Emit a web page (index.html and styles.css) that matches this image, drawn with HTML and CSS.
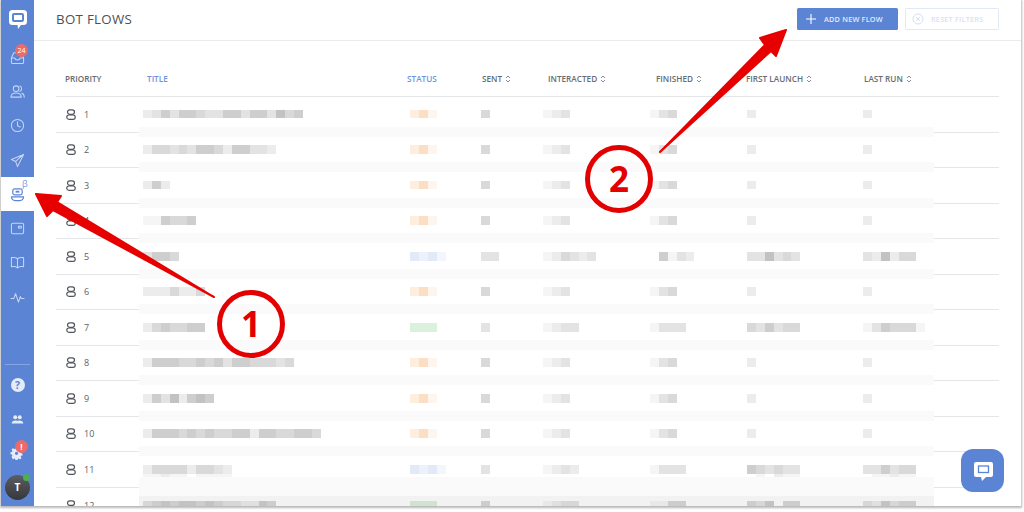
FILE: index.html
```html
<!DOCTYPE html>
<html lang="en">
<head>
<meta charset="utf-8">
<title>Bot Flows</title>
<link rel="stylesheet" href="styles.css">
</head>
<body>
<div class="window">
  <nav class="sidebar">
    <div class="logo">
      <svg width="20" height="21" viewBox="0 0 20 21"><path class="logo-b" d="M4.500 1h11a3.500 3.500 0 0 1 3.500 3.500v8a3.500 3.500 0 0 1-3.500 3.500h-2.500l-3 4-.5-4H4.500A3.500 3.500 0 0 1 1 12.500v-8A3.500 3.500 0 0 1 4.500 1z"/><rect class="logo-s" x="5" y="5" width="10" height="7" rx="1"/></svg>
    </div>
    <div class="nav-item">
      <svg class="ico" width="15" height="15" viewBox="0 0 16 16"><path d="M1.500 8.500 4 3h8l2.500 5.500V13a1.500 1.500 0 0 1-1.500 1.500H3A1.500 1.500 0 0 1 1.500 13zM1.500 8.500H5c.5 1.500 1.500 2.200 3 2.200s2.500-.7 3-2.200h3.500"/></svg>
      <span class="badge badge-num">24</span>
    </div>
    <div class="nav-item">
      <svg class="ico" width="15" height="15" viewBox="0 0 16 16"><circle cx="6.500" cy="5" r="3"/><path d="M1 14c0-3 2.300-4.500 5.500-4.500S12 11 12 14zM10.500 2.200c2 .2 2.800 4.800 0 5.500M12.500 9.800c1.600.5 2.700 2 2.700 4.200"/></svg>
    </div>
    <div class="nav-item">
      <svg class="ico" width="15" height="15" viewBox="0 0 16 16"><circle cx="8" cy="8" r="6.500"/><path d="M8 4v4.300l3 1.200"/></svg>
    </div>
    <div class="nav-item">
      <svg class="ico" width="15" height="15" viewBox="0 0 16 16"><path d="M14.500 1.500 1.500 7l4.500 2 2 5.500zM14.500 1.500 6 9"/></svg>
    </div>
    <div class="nav-item nav-active">
      <svg class="ico-dark" width="15" height="15" viewBox="0 0 16 16"><rect x="3" y="2" width="10" height="6.500" rx="2"/><path d="M1.500 10.500h13c0 2.500-2 4-4 4h-5c-2 0-4-1.500-4-4z"/><rect class="fill" x="6" y="4" width="4" height="2"/></svg>
      <span class="beta">β</span>
    </div>
    <div class="nav-item">
      <svg class="ico" width="15" height="15" viewBox="0 0 16 16"><rect x="1.500" y="2.500" width="13" height="11" rx="1.500"/><path d="M9 5.500h3v2H9z"/></svg>
    </div>
    <div class="nav-item">
      <svg class="ico" width="15" height="15" viewBox="0 0 16 16"><path d="M8 4C6.500 2.800 4 2.500 1.500 2.800v9.700c2.500-.3 5 0 6.500 1.200 1.500-1.200 4-1.500 6.500-1.200V2.800C12 2.500 9.500 2.800 8 4zM8 4v9.700"/></svg>
    </div>
    <div class="nav-item">
      <svg class="ico" width="15" height="15" viewBox="0 0 16 16"><path d="M1 9h3l2-5 3 9 2-6 1 2h3"/></svg>
    </div>
    <div class="nav-spacer"></div>
    <div class="nav-divider"></div>
    <div class="nav-item nav-low">
      <span class="help">?</span>
    </div>
    <div class="nav-item nav-low">
      <svg class="ico-fill" width="13" height="9" viewBox="0 0 14 10"><circle cx="4.500" cy="2.500" r="2.200"/><circle cx="9.500" cy="2.500" r="2.200"/><path d="M0.500 9.500c0-2.500 2-3.500 4-3.500s2.500.6 2.500.6.700-.6 2.500-.6 4 1 4 3.500z"/></svg>
    </div>
    <div class="nav-item nav-low">
      <svg class="ico-fill gear" width="13" height="13" viewBox="-1 0 16 14"><path fill-rule="evenodd" d="M5.800.8h2.400l.4 1.800 1.200.5 1.600-1 1.700 1.700-1 1.600.5 1.200 1.800.4v2.400l-1.800.4-.5 1.200 1 1.600-1.700 1.700-1.600-1-1.200.5-.4 1.800H5.800l-.4-1.800-1.200-.5-1.600 1L.9 11l1-1.600-.5-1.200L-.4 7.800V5.400l1.800-.4.500-1.200-1-1.600L2.600.5l1.600 1 1.200-.5zM7 4.700a2 2 0 1 0 0 4 2 2 0 0 0 0-4z"/></svg>
      <span class="badge badge-alert">!</span>
    </div>
    <div class="nav-item nav-low">
      <span class="avatar">T</span>
      <span class="online"></span>
    </div>
  </nav>

  <main class="content">
    <header class="topbar">
      <h1 class="title">BOT FLOWS</h1>
      <div class="actions">
        <button class="btn btn-primary">
          <svg class="plus" width="10" height="10" viewBox="0 0 10 10"><path d="M5 0v10M0 5h10"/></svg>
          ADD NEW FLOW
        </button>
        <button class="btn btn-ghost">
          <svg class="reset-ico" width="12" height="12" viewBox="0 0 12 12"><circle cx="6" cy="6" r="5"/><path d="M4 4l4 4M8 4l-4 4"/></svg>
          RESET FILTERS
        </button>
      </div>
    </header>
    <section class="table">
      <div class="thead">
        <span>PRIORITY</span>
        <span class="th-blue">TITLE</span>
        <span class="th-blue">STATUS</span>
        <span>SENT<svg class="sort" viewBox="0 0 6 8"><path d="M1 3 3 1l2 2M1 5l2 2 2-2"/></svg></span>
        <span>INTERACTED<svg class="sort" viewBox="0 0 6 8"><path d="M1 3 3 1l2 2M1 5l2 2 2-2"/></svg></span>
        <span>FINISHED<svg class="sort" viewBox="0 0 6 8"><path d="M1 3 3 1l2 2M1 5l2 2 2-2"/></svg></span>
        <span>FIRST LAUNCH<svg class="sort" viewBox="0 0 6 8"><path d="M1 3 3 1l2 2M1 5l2 2 2-2"/></svg></span>
        <span>LAST RUN<svg class="sort" viewBox="0 0 6 8"><path d="M1 3 3 1l2 2M1 5l2 2 2-2"/></svg></span>
      </div>
      <div class="tbody" id="rows"></div>
    </section>
    <button class="fab" aria-label="Chat">
      <svg width="24" height="24" viewBox="0 0 24 24"><path class="logo-b" d="M5 3h15a2 2 0 0 1 2 2v11a2 2 0 0 1-2 2h-5l-4 4-1-4H5a2 2 0 0 1-2-2V5a2 2 0 0 1 2-2z"/><rect class="fab-s" x="7.500" y="7" width="10" height="6.500"/></svg>
    </button>
  </main>
</div>

<svg class="marks" width="1024" height="512" viewBox="0 0 1024 512">
  <polygon class="arrow" points="36,194 61,196 57,202 214,297 53,210 47,216"/>
  <polygon class="arrow" points="786,30 760,38 765,45 660,152 771,51 776,56"/>
  <circle class="ring" cx="251" cy="324" r="31.500"/>
  <circle class="ring" cx="619" cy="179" r="31.500"/>
  <text class="digit" x="251" y="337">1</text>
  <text class="digit" x="619" y="192">2</text>
</svg>
<script src="app.js"></script>
</body>
</html>
```
FILE: styles.css
```css
* { box-sizing: border-box; }
html, body { margin: 0; height: 100%; background: #fff; overflow: hidden; }
body { font-family: "Open Sans", "Liberation Sans", sans-serif; color: #555b63; }

.window {
  display: flex;
  width: 1020px;
  height: 506px;
  margin-left: 1px;
  background: #fff;
  box-shadow: 0 1px 2px 1px rgba(0, 0, 0, .28);
  overflow: hidden;
}

/* sidebar */
.sidebar {
  flex: 0 0 33px;
  display: flex;
  flex-direction: column;
  padding-bottom: 2px;
  background: #5b84d5;
}
.logo { height: 40px; display: flex; align-items: center; justify-content: center; padding-bottom: 1px; }
.logo-b { fill: #fff; }
.logo-s { fill: none; stroke: #5b84d5; stroke-width: 2; }
.nav-item {
  position: relative;
  flex: 0 0 34.300px;
  display: flex;
  align-items: center;
  justify-content: center;
}
.nav-low { flex-basis: 34px; }
.nav-active { background: #fff; }
.nav-spacer { flex: 1; }
.nav-divider { height: 1px; margin: 0 4px 3px; background: #86a4e0; }
.ico { fill: none; stroke: #c6d5f2; stroke-width: 1.100; stroke-linejoin: round; stroke-linecap: round; }
.ico-dark { fill: none; stroke: #5b84d5; stroke-width: 1.300; stroke-linejoin: round; }
.ico-dark .fill { fill: #5b84d5; stroke: none; }
.ico-fill { fill: #e4ebf9; }
.gear { margin-right: 2px; }
.badge {
  position: absolute;
  border-radius: 50%;
  background: #ee6a68;
  color: #fff;
  display: flex;
  align-items: center;
  justify-content: center;
}
.badge-num { left: 14px; top: 4px; width: 13px; height: 13px; font-size: 7px; }
.badge-alert { left: 14px; top: 4px; width: 13px; height: 13px; font-size: 8px; font-weight: 700; }
.beta { position: absolute; left: 21px; top: 2px; font-size: 9px; line-height: 10px; color: #7c9be0; }
.help {
  width: 14px; height: 14px;
  border-radius: 50%;
  background: #e4ebf9;
  color: #5b84d5;
  font-size: 10.500px; font-weight: 700; line-height: 14px;
  text-align: center;
}
.avatar {
  width: 25px; height: 25px;
  border-radius: 50%;
  background: linear-gradient(#5a5d62, #35373b);
  color: #fff;
  font-size: 10px; font-weight: 700; line-height: 25px;
  text-align: center;
}
.online { position: absolute; left: 22px; top: 4px; width: 7px; height: 7px; border-radius: 50%; background: #4caf50; }

/* main */
.content { position: relative; flex: 1; min-width: 0; display: flex; flex-direction: column; }
.topbar {
  flex: 0 0 41px;
  display: flex;
  align-items: flex-start;
  justify-content: space-between;
  padding: 8px 22px 0 22px;
  border-bottom: 1px solid #e9ebee;
}
.title { margin: 2px 0 0; font-size: 13.300px; line-height: 18px; font-weight: 400; letter-spacing: .3px; color: #4d5157; }
.actions { display: flex; gap: 7px; }
.btn {
  height: 22px;
  display: flex;
  align-items: center;
  border-radius: 1.500px;
  font: 600 7.300px "Open Sans", sans-serif;
  letter-spacing: .2px;
  padding: 0;
}
.btn-primary { width: 101px; padding-left: 9px; gap: 8px; background: #5b84d5; border: 0; color: #e3eafa; }
.plus { stroke: #fff; stroke-width: 1.100; fill: none; }
.btn-ghost { width: 94px; padding-left: 6px; gap: 7px; background: #fff; border: 1px solid #e1e8f7; color: #d8e1f4; }
.reset-ico { fill: none; stroke: #cfdbf3; stroke-width: .9; }

/* table */
.table { padding: 0 22px; }
.thead {
  height: 56px;
  padding: 32px 0 0 9px;
  display: grid;
  grid-template-columns: 82px 260px 75px 66px 108px 90px 118px 1fr;
  align-items: start;
  font-size: 8.200px;
  line-height: 11px;
  font-weight: 600;
  color: #666c74;
  border-bottom: 1px solid #e4e6e9;
}
.thead span { white-space: nowrap; display: flex; align-items: center; }
.th-blue { color: #6e93dc; }
.sort { width: 6px; height: 8px; margin-left: 3px; fill: none; stroke: #6a7078; stroke-width: .8; }
.row {
  position: relative;
  height: 35.550px;
  display: grid;
  grid-template-columns: 87px 267px 71px 62px 107px 97px 116px 1fr;
  align-items: start;
  padding-top: 12.500px;
  border-bottom: 1px solid #e4e6e9;
}
/* faint band from the redaction smudge across each row boundary */
.row::after {
  content: "";
  position: absolute;
  left: 83px;
  width: 795px;
  bottom: -5px;
  height: 10px;
  background: #fafafa;
  z-index: 1;
}
.row-tall::after { height: 19px; bottom: -9px; }
.row-last::after { top: 8px; bottom: auto; height: 11px; background: rgba(0, 0, 0, .05); }
.pri { display: flex; align-items: center; padding: 0 0 0 10px; margin-top: -1px; font-size: 9px; line-height: 11px; color: #5a5f66; }
.bot { fill: none; stroke: #50555c; stroke-width: 1.200; width: 10px; height: 11px; margin-right: 8px; }
.cell { display: flex; flex-direction: column; }
.line { display: flex; }
.line i { flex: 0 0 8.900px; height: 8.900px; }
.l1 { background: #f5f5f5; }
.l2 { background: #ececec; }
.l3 { background: #e3e3e3; }
.l4 { background: #d9d9d9; }
.l5 { background: #cecece; }
.l6 { background: #c2c2c2; }
.la { background: #fdeedd; }
.lb { background: #fbdfc4; }
.lc { background: #fef6ee; }
.ld { background: #e2eaf8; }
.le { background: #ecf1fb; }
.lh { background: #f3f6fc; }
.lg { background: #dcf0de; }

.fab {
  position: absolute;
  right: 17px;
  bottom: 14px;
  width: 43px; height: 43px;
  padding: 0;
  border: 0;
  border-radius: 12px;
  background: #5b84d5;
  display: flex;
  align-items: center;
  justify-content: center;
  z-index: 2;
}
.fab-s { fill: none; stroke: #5b84d5; stroke-width: 1.300; }

/* annotations */
.marks { position: absolute; left: 0; top: 0; pointer-events: none; z-index: 3; }
.arrow { fill: #e60000; stroke: #e60000; stroke-width: 2; stroke-linejoin: round; }
.ring { fill: none; stroke: #e30000; stroke-width: 5; }
.digit { fill: #e30000; font-family: "Open Sans", sans-serif; font-weight: 700; font-size: 35px; text-anchor: middle; }
```
FILE: app.js
```js
// Redacted table data: each character is one pixelated smudge block.
var O = 'abc', B = 'dedh', G = 'ggg';
var F = ['123', '134', '2', '2'];
var data = [
  ['235355433553553645', O, '4', F],
  ['244343554255332', O, '4', F],
  ['252', O, '4', F],
  ['115445', O, '4', F],
  ['3554', B, '33', ['124323', '.5132', '336343', '326244']],
  ['2224224', O, '4', F],
  ['2454455', G, '3', ['1233', '1333', '435344', '1354441']],
  ['25554454535544434', O, '4', F],
  ['25362565', O, '4', F],
  ['25554545445525544554', O, '4', F],
  ['2444424432|11211.1111', B, '3', ['1232', '1333', '543433|.1.211', '335344|.11211']],
  ['345455454332254', G, '4', ['1233', '1144', '435.44', '325344']]
];

function line(str) {
  return '<div class="line">' + str.split('').map(function (c) {
    return c === '.' ? '<i></i>' : '<i class="l' + c + '"></i>';
  }).join('') + '</div>';
}
function cell(str) {
  return '<div class="cell">' + str.split('|').map(line).join('') + '</div>';
}
var bot = '<svg class="bot" viewBox="0 0 10 11"><rect x="1.500" y=".8" width="7" height="4.500" rx="2.200"/><rect x=".8" y="6" width="8.400" height="4.300" rx="2.100"/></svg>';

document.getElementById('rows').innerHTML = data.map(function (r, i) {
  var f = r[3];
  var cls = i === 10 ? ' row-tall' : i === 11 ? ' row-last' : '';
  return '<div class="row' + cls + '">' +
    '<div class="pri">' + bot + (i + 1) + '</div>' +
    cell(r[0]) + cell(r[1]) + cell(r[2]) + cell(f[0]) + cell(f[1]) + cell(f[2]) + cell(f[3]) +
    '</div>';
}).join('');
```
